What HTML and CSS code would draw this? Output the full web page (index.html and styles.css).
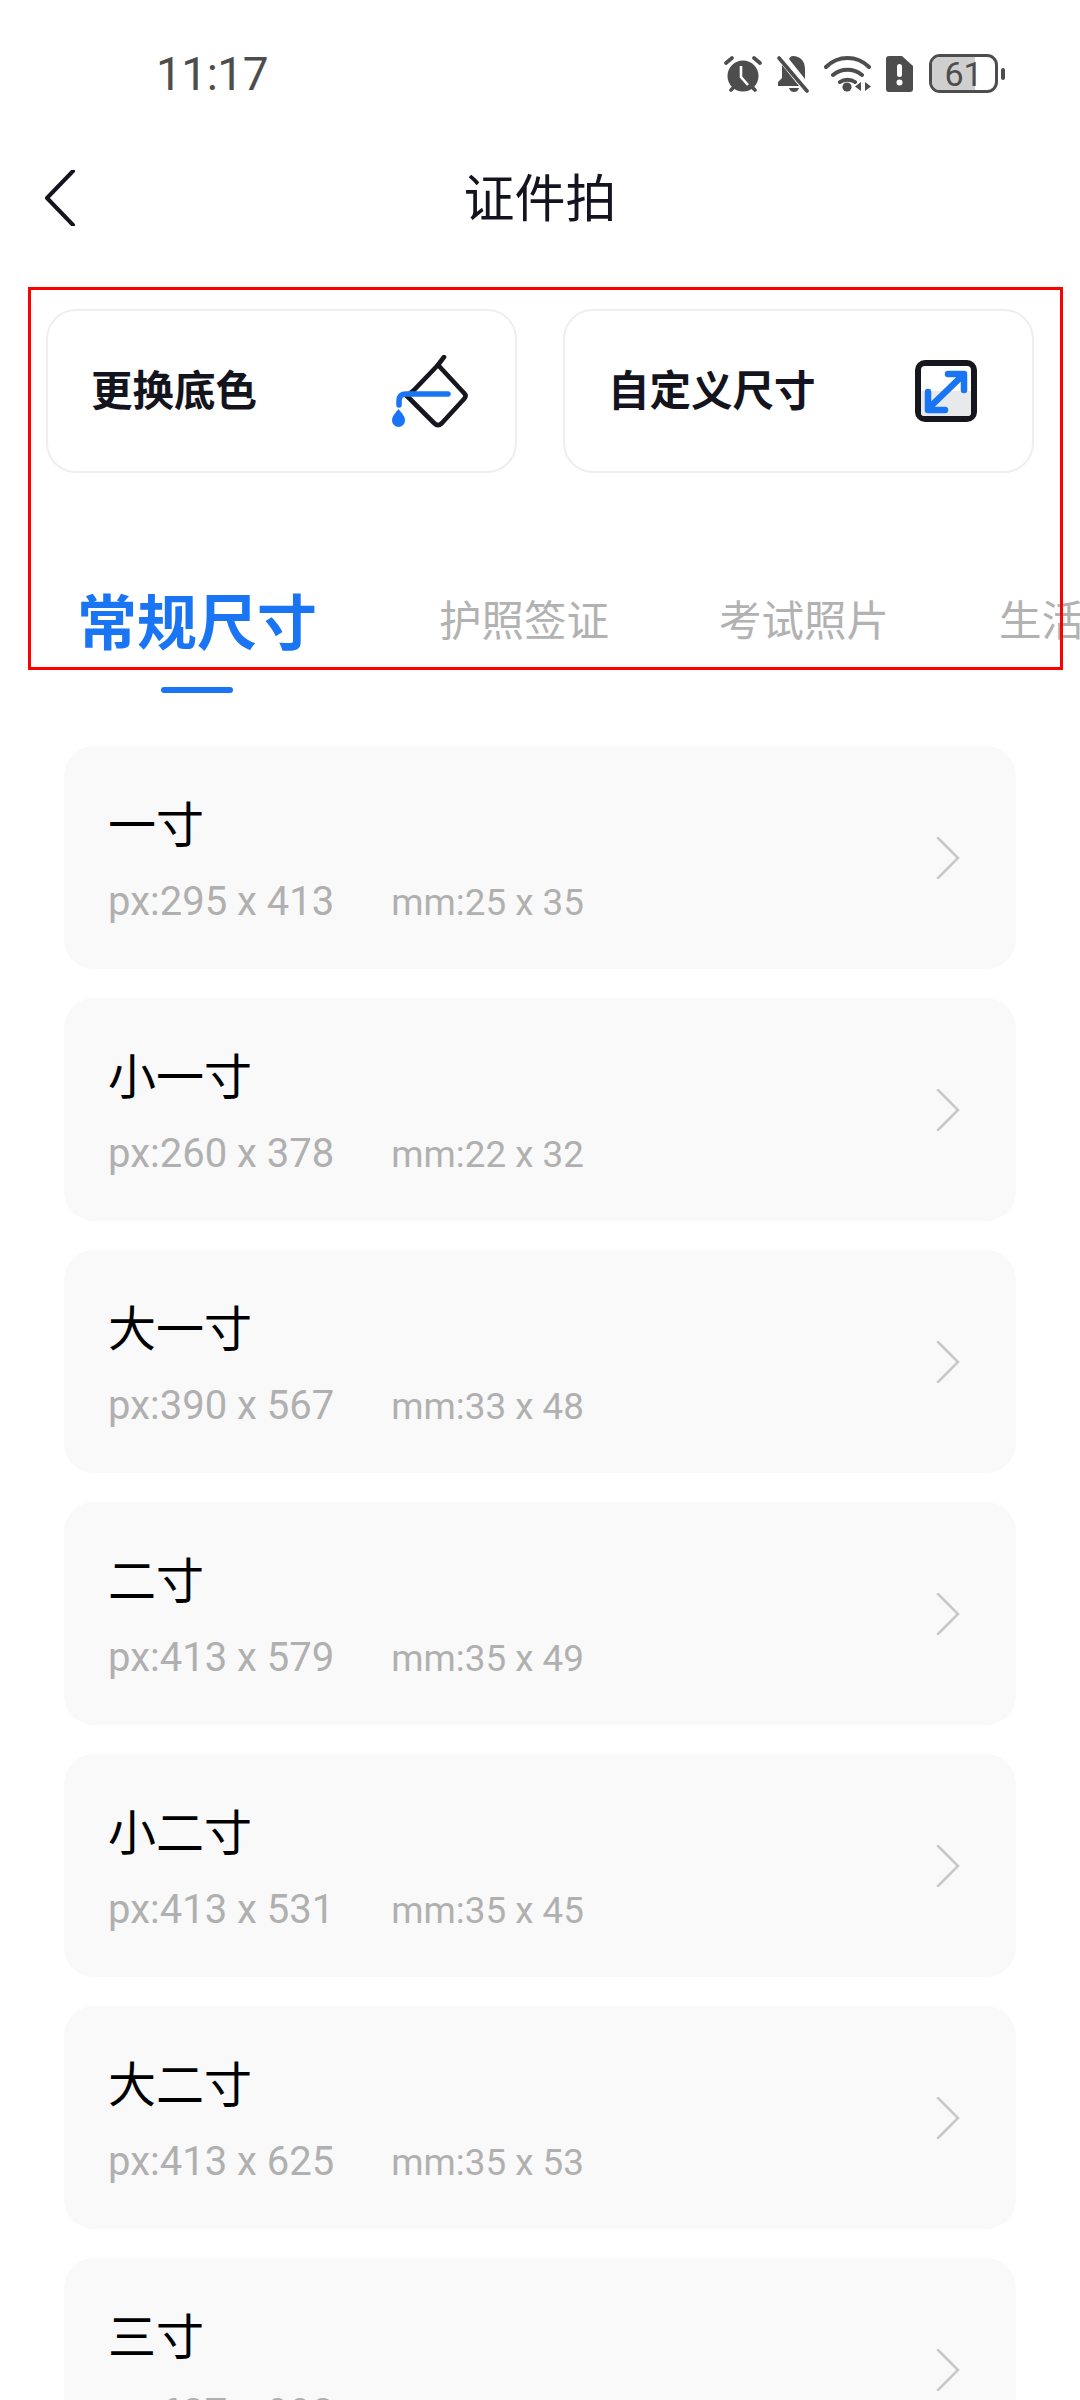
FILE: index.html
```html
<!DOCTYPE html>
<html lang="zh">
<head>
<meta charset="utf-8">
<title>证件拍</title>
<link rel="stylesheet" href="styles.css">
</head>
<body>
<div class="page">
  <header class="status">
    <span class="time">11:17</span>
    <div class="status-icons">
      <svg width="38" height="38" viewBox="0 0 38 38"><path class="s" d="M2 8l6-5M36 8l-6-5M7 35l3-3M31 35l-3-3" stroke-width="3.6"/><circle cx="19" cy="21" r="15.500" fill="#4d4d4d"/><path d="M17 11v11l7 8" fill="none" stroke="#fff" stroke-width="2.600"/></svg>
      <svg width="32" height="38" viewBox="0 0 32 38"><path d="M16 1c7 0 12 5 12 13v10L12 4c1-2 2-3 4-3zM5 10l17 21H1v-4l4-4zM12 33h10c-1 3-3 4-5 4s-4-1-5-4z" fill="#4d4d4d"/><path class="s" d="M2 3l28 33" stroke-width="3.600"/></svg>
      <svg width="47" height="36" viewBox="0 0 47 36"><path class="s" d="M2 11c12-12 31-12 43 0M9 19c8-7 21-7 29 0M16 26c4-3 11-3 15 0" stroke-width="4"/><circle cx="23" cy="31" r="4.600" fill="#4d4d4d"/><path d="M37 26v9l-6-4.500zM41 26v9l6-4.500z" fill="#4d4d4d"/></svg>
      <svg width="27" height="36" viewBox="0 0 27 36"><path d="M3 0h13l11 10v23a3 3 0 0 1-3 3H3a3 3 0 0 1-3-3V3a3 3 0 0 1 3-3z" fill="#4d4d4d"/><rect x="11" y="8" width="5" height="13" rx="2.500" fill="#fff"/><circle cx="13.500" cy="26.500" r="3" fill="#fff"/></svg>
      <div class="battery">
        <div class="battery-body"><div class="battery-fill"></div><span class="battery-num">61</span></div>
        <div class="battery-cap"></div>
      </div>
    </div>
  </header>

  <nav class="nav">
    <svg class="back" width="34" height="56" viewBox="0 0 34 56"><path d="M29 1L3 28l26 27" fill="none" stroke="#141420" stroke-width="4" stroke-linecap="round" stroke-linejoin="round"/></svg>
    <h1 class="title">证件拍</h1>
  </nav>

  <section class="tools">
    <div class="tool">
      <span class="tool-label">更换底色</span>
      <svg class="tool-icon" width="76" height="73" viewBox="0 0 76 73"><path d="M46 10l26 28q3 3 0 6L50 68q-4 4-8 0L15 41" fill="none" stroke="#16161e" stroke-width="4.600" stroke-linejoin="round" stroke-linecap="round"/><path d="M46 10L22 35 15 41M46 10l6-8" fill="none" stroke="#16161e" stroke-width="4.600" stroke-linecap="round"/><path d="M56 39H14q-7 0-7 7v4" fill="none" stroke="#1a75f5" stroke-width="5.500" stroke-linecap="round"/><path d="M6.500 54c3 4 6.500 7 6.500 11.500a6.500 6.500 0 0 1-13 0C0 61 3.500 58 6.500 54z" fill="#1a75f5"/></svg>
    </div>
    <div class="tool">
      <span class="tool-label">自定义尺寸</span>
      <svg class="tool-icon tool-icon-resize" width="62" height="62" viewBox="0 0 62 62"><rect x="3" y="3" width="56" height="56" rx="7" fill="#fff" stroke="#16161e" stroke-width="6"/><path d="M6 31h50v22a3 3 0 0 1-3 3H9a3 3 0 0 1-3-3z" fill="#e8e9eb"/><path d="M16 46L47 16M33 14h16v16M13 32v18h17" fill="none" stroke="#1a75f5" stroke-width="6.500" stroke-linecap="round" stroke-linejoin="round"/></svg>
    </div>
  </section>

  <div class="tabs">
    <div class="tab tab-active">常规尺寸</div>
    <div class="tab">护照签证</div>
    <div class="tab">考试照片</div>
    <div class="tab">生活照片</div>
  </div>
  <div class="tab-indicator"></div>

  <main class="list">
    <article class="row"><div class="row-text"><div class="row-name">一寸</div><div class="row-meta"><span class="px">px:295 x 413</span><span class="mm">mm:25 x 35</span></div></div><svg class="chev" width="24" height="42" viewBox="0 0 24 42"><path d="M2 1l20 20L2 41"/></svg></article>
    <article class="row"><div class="row-text"><div class="row-name">小一寸</div><div class="row-meta"><span class="px">px:260 x 378</span><span class="mm">mm:22 x 32</span></div></div><svg class="chev" width="24" height="42" viewBox="0 0 24 42"><path d="M2 1l20 20L2 41"/></svg></article>
    <article class="row"><div class="row-text"><div class="row-name">大一寸</div><div class="row-meta"><span class="px">px:390 x 567</span><span class="mm">mm:33 x 48</span></div></div><svg class="chev" width="24" height="42" viewBox="0 0 24 42"><path d="M2 1l20 20L2 41"/></svg></article>
    <article class="row"><div class="row-text"><div class="row-name">二寸</div><div class="row-meta"><span class="px">px:413 x 579</span><span class="mm">mm:35 x 49</span></div></div><svg class="chev" width="24" height="42" viewBox="0 0 24 42"><path d="M2 1l20 20L2 41"/></svg></article>
    <article class="row"><div class="row-text"><div class="row-name">小二寸</div><div class="row-meta"><span class="px">px:413 x 531</span><span class="mm">mm:35 x 45</span></div></div><svg class="chev" width="24" height="42" viewBox="0 0 24 42"><path d="M2 1l20 20L2 41"/></svg></article>
    <article class="row"><div class="row-text"><div class="row-name">大二寸</div><div class="row-meta"><span class="px">px:413 x 625</span><span class="mm">mm:35 x 53</span></div></div><svg class="chev" width="24" height="42" viewBox="0 0 24 42"><path d="M2 1l20 20L2 41"/></svg></article>
    <article class="row"><div class="row-text"><div class="row-name">三寸</div><div class="row-meta"><span class="px">px:637 x 992</span><span class="mm">mm:54 x 84</span></div></div><svg class="chev" width="24" height="42" viewBox="0 0 24 42"><path d="M2 1l20 20L2 41"/></svg></article>
  </main>

  <div class="highlight"></div>
</div>
</body>
</html>
```

FILE: styles.css
```css
* { box-sizing: border-box; margin: 0; padding: 0; }
html, body { width: 1080px; height: 2400px; overflow: hidden; background: #fff; }
body { font-family: "Noto Sans CJK SC", "Noto Sans", sans-serif; }
.page { position: relative; width: 1080px; height: 2400px; overflow: hidden; background: #fff; }

.status { height: 147px; display: flex; align-items: center; justify-content: space-between; padding: 0 75px 0 156px; }
.time { font-family: Roboto, sans-serif; font-size: 46px; color: #4d4d4d; letter-spacing: -0.5px; }
.status-icons { display: flex; align-items: center; gap: 15px; }
.status svg { display: block; }
.s { fill: none; stroke: #4d4d4d; stroke-linecap: round; }
.battery { display: flex; align-items: center; gap: 3px; margin-left: 1px; }
.battery-body { position: relative; width: 69px; height: 39px; border: 3px solid #4d4d4d; border-radius: 11px; overflow: hidden; display: flex; align-items: center; justify-content: center; }
.battery-fill { position: absolute; left: 0; top: 0; bottom: 0; width: 69%; background: #cfcfcf; }
.battery-num { position: relative; font-family: Roboto, sans-serif; font-size: 34px; line-height: 1; color: #4d4d4d; }
.battery-cap { width: 4px; height: 12px; border-radius: 2px; background: #4d4d4d; }

.nav { position: relative; height: 105px; padding-bottom: 8px; display: flex; align-items: center; justify-content: center; }
.back { position: absolute; left: 44px; top: 23px; }
.title { font-size: 51px; font-weight: 400; color: #141420; line-height: 1; }

.tools { display: flex; gap: 46px; padding: 57px 46px 0; }
.tool { flex: 1; height: 164px; border: 2px solid #eeeeee; border-radius: 30px; padding: 0 47px 0 43px; display: flex; align-items: center; justify-content: space-between; }
.tool-label { font-size: 41.500px; font-weight: 700; color: #14141e; line-height: 1; margin-bottom: 4px; }
.tool-icon { flex: none; }
.tool-icon-resize { margin-right: 8px; }

.tabs { display: flex; align-items: center; height: 90px; margin-top: 103px; padding: 0 0 5px 77px; gap: 110px; overflow: hidden; white-space: nowrap; }
.tab { flex: none; font-size: 42.500px; color: #b2b2b2; line-height: 1; }
.tab-active { font-size: 60px; font-weight: 700; color: #1a75f5; margin-right: 12px; }
.tab-indicator { width: 72px; height: 6px; border-radius: 3px; background: #1a75f5; margin: 21px 0 0 161px; }

.list { display: flex; flex-direction: column; gap: 29px; padding: 53px 64px 0; }
.row { flex: none; height: 223px; background: #f9f9f9; border-radius: 30px; display: flex; align-items: center; justify-content: space-between; padding: 0 56px 0 44px; }
.row-text { padding-bottom: 2px; }
.row-name { font-size: 48px; color: #000; line-height: 64px; }
.row-meta { display: flex; align-items: baseline; gap: 57px; font-family: Roboto, sans-serif; color: #b0b0b0; line-height: 44px; margin-top: 27px; }
.px { font-size: 40px; }
.mm { font-size: 36.800px; }
.chev { flex: none; fill: none; stroke: #c8c8c8; stroke-width: 2.500; stroke-linecap: round; }

.highlight { position: absolute; left: 28px; top: 287px; width: 1035px; height: 383px; border: 3px solid #f00; pointer-events: none; }
```
